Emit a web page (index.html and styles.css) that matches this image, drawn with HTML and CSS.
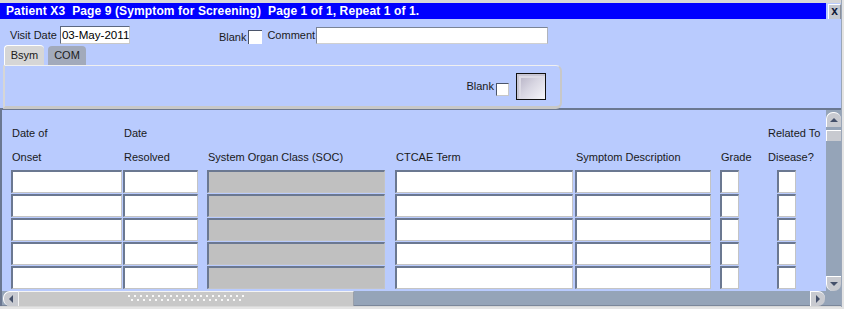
FILE: index.html
```html
<!DOCTYPE html>
<html>
<head>
<meta charset="utf-8">
<link rel="stylesheet" href="styles.css">
</head>
<body>
<div class="window">
  <div class="titlerow">
    <div class="titlebar">Patient X3&nbsp; Page 9 (Symptom for Screening)&nbsp; Page 1 of 1, Repeat 1 of 1.</div>
    <div class="closebtn">x</div>
  </div>
  <div class="header">
    <div class="toprow">
      <span class="lbl">Visit Date</span>
      <span class="field date">03-May-2011</span>
      <span class="lbl blank1">Blank</span>
      <span class="chk"></span>
      <span class="lbl comment">Comment</span>
      <span class="field commentbox"></span>
    </div>
    <div class="tabs">
      <div class="tab active">Bsym</div>
      <div class="tab">COM</div>
    </div>
    <div class="tabpanel">
      <span class="lbl">Blank</span>
      <span class="chk small"></span>
      <span class="sqbtn"></span>
    </div>
  </div>
  <div class="block">
    <div class="blockmain">
      <div class="grid">
        <div class="hrow">
          <div class="c c1">Date of</div>
          <div class="c c2">Date</div>
          <div class="c c3"></div>
          <div class="c c4"></div>
          <div class="c c5"></div>
          <div class="c c6"></div>
          <div class="c c7h">Related To</div>
        </div>
        <div class="hrow">
          <div class="c c1">Onset</div>
          <div class="c c2">Resolved</div>
          <div class="c c3">System Organ Class (SOC)</div>
          <div class="c c4">CTCAE Term</div>
          <div class="c c5">Symptom Description</div>
          <div class="c c6">Grade</div>
          <div class="c c7h">Disease?</div>
        </div>
        <div class="drow"><div class="f c1"></div><div class="f c2"></div><div class="f c3 ro"></div><div class="f c4"></div><div class="f c5"></div><div class="f c6"></div><div class="f c7"></div></div>
        <div class="drow"><div class="f c1"></div><div class="f c2"></div><div class="f c3 ro"></div><div class="f c4"></div><div class="f c5"></div><div class="f c6"></div><div class="f c7"></div></div>
        <div class="drow"><div class="f c1"></div><div class="f c2"></div><div class="f c3 ro"></div><div class="f c4"></div><div class="f c5"></div><div class="f c6"></div><div class="f c7"></div></div>
        <div class="drow"><div class="f c1"></div><div class="f c2"></div><div class="f c3 ro"></div><div class="f c4"></div><div class="f c5"></div><div class="f c6"></div><div class="f c7"></div></div>
        <div class="drow"><div class="f c1"></div><div class="f c2"></div><div class="f c3 ro"></div><div class="f c4"></div><div class="f c5"></div><div class="f c6"></div><div class="f c7"></div></div>
      </div>
      <div class="vscroll">
        <div class="vbtn up"><svg width="10" height="6" viewBox="0 0 10 6"><path d="M1 5 L5 1 L9 5 Z" fill="#44506a"/></svg></div>
        <div class="vthumb"></div>
        <div class="vtrack"></div>
        <div class="vbtn down"><svg width="10" height="6" viewBox="0 0 10 6"><path d="M1 1 L5 5 L9 1 Z" fill="#44506a"/></svg></div>
      </div>
    </div>
    <div class="hscroll">
      <div class="hbtn left"><svg width="6" height="10" viewBox="0 0 6 10"><path d="M5 1 L1 5 L5 9 Z" fill="#44506a"/></svg></div>
      <div class="hthumb"><div class="grip"></div></div>
      <div class="htrack"></div>
      <div class="hbtn right"><svg width="6" height="10" viewBox="0 0 6 10"><path d="M1 1 L5 5 L1 9 Z" fill="#44506a"/></svg></div>
      <div class="corner"></div>
    </div>
  </div>
</div>
</body>
</html>
```
FILE: styles.css
```css
* { box-sizing: border-box; }
body {
  margin: 0;
  background: #e4e4e4;
  font-family: "Liberation Sans", Arial, sans-serif;
  font-size: 11px;
  color: #1a1a1a;
}
.window {
  width: 842px;
  height: 307px;
  padding-top: 3px;
  background: #d8d8d8;
  border-right: 1px solid #9aa6b8;
}
.titlerow {
  display: flex;
  align-items: flex-start;
  height: 16px;
  background: #b9cbfe;
}
.titlebar {
  flex: 0 0 826px;
  height: 16px;
  background: #0000ff;
  color: #fff;
  font-weight: bold;
  font-size: 12px;
  letter-spacing: 0.12px;
  line-height: 16px;
  padding-left: 6px;
  white-space: nowrap;
}
.closebtn {
  margin-left: 2px;
  margin-top: 1px;
  width: 13px;
  height: 15px;
  background: #c4c8d0;
  border-top: 1px solid #fff;
  border-left: 1px solid #fff;
  border-right: 1px solid #8a8f9a;
  font-weight: bold;
  font-size: 12px;
  line-height: 13px;
  text-align: center;
  color: #101838;
}
.header {
  background: #b9cbfe;
  height: 91px;
  padding-top: 7px;
  border-bottom: 2px solid #6b7891;
}
.toprow {
  display: flex;
  align-items: center;
  height: 18px;
  padding-left: 10px;
}
.lbl { white-space: nowrap; }
.field {
  background: #fff;
  border-top: 2px solid #6b7891;
  border-left: 2px solid #6b7891;
  border-right: 1px solid #c8c8c8;
  border-bottom: 1px solid #c8c8c8;
}
.date {
  margin-left: 3px;
  width: 70px;
  height: 18px;
  font-size: 11.6px;
  line-height: 15px;
  color: #000;
  padding-left: 1px;
  border-top: 1px solid #5b6780;
  border-left: 1px solid #5b6780;
  white-space: nowrap;
  overflow: hidden;
}
.blank1 { margin-left: 89px; margin-top: 4px; }
.chk {
  width: 14px;
  height: 14px;
  background: #fff;
  border-top: 1px solid #4b556a;
  border-left: 1px solid #4b556a;
  margin-left: 2px;
  margin-top: 4px;
}
.comment { margin-left: 5px; }
.commentbox {
  margin-left: 1px;
  width: 232px;
  height: 17px;
  border-top: 1px solid #7a8496;
  border-left: 1px solid #7a8496;
  border-right: 1px solid #b0b4bc;
  border-bottom: 1px solid #d0d0d0;
}
.tabs {
  display: flex;
  margin-top: 1px;
  padding-left: 4px;
  height: 20px;
  align-items: flex-end;
}
.tab {
  height: 19px;
  line-height: 18px;
  background: #a2aabb;
  border-top-left-radius: 4px;
  border-top-right-radius: 4px;
  margin-right: 4px;
  color: #202020;
  text-align: center;
  width: 38px;
}
.tab.active {
  width: 40px;
  height: 20px;
  background: #d6d6d6;
  border-top: 1px solid #fff;
  border-left: 1px solid #fff;
}
.tabpanel {
  margin-left: 3px;
  width: 559px;
  height: 44px;
  border-top: 1px solid #f0f0f0;
  border-left: 2px solid #d6d6d6;
  border-right: 2px solid #c8c8c8;
  border-bottom: 3px solid #c8c8c8;
  border-top-right-radius: 6px;
  border-bottom-right-radius: 6px;
  display: flex;
  align-items: center;
  justify-content: flex-end;
  padding-right: 14px;
}
.chk.small {
  width: 13px;
  height: 13px;
  margin: 6px 7px 0 2px;
  border-right: 1px solid #c8c8c8;
  border-bottom: 1px solid #c8c8c8;
}
.sqbtn {
  width: 30px;
  height: 27px;
  border: 1px solid #111;
  background: linear-gradient(135deg, #b0acc0 0%, #d8d6e2 50%, #f6f6fa 100%);
  box-shadow: inset 2px 2px 0 #c8c6d4, inset 4px 4px 0 #dcdae4;
}
.block {
  background: #b9cbfe;
  border-left: 2px solid #6b7891;
}
.blockmain {
  display: flex;
  height: 181px;
}
.grid {
  flex: 0 0 824px;
  padding-top: 12px;
  overflow: hidden;
}
.hrow {
  display: flex;
  height: 24px;
  line-height: 22px;
  white-space: nowrap;
}
.drow {
  display: flex;
  height: 24px;
}
.c, .f { flex: 0 0 auto; }
.c { padding-left: 1px; }
.c1 { margin-left: 9px; width: 111px; }
.c2 { margin-left: 1px; width: 75px; }
.c3 { margin-left: 9px; width: 178px; }
.c4 { margin-left: 10px; width: 178px; }
.c5 { margin-left: 2px; width: 136px; }
.c6 { margin-left: 9px; width: 19px; }
.c7 { margin-left: 38px; width: 19px; }
.c7h { margin-left: 28px; width: 60px; }
.f {
  height: 23px;
  background: #fff;
  border-top: 2px solid #6b7891;
  border-left: 2px solid #6b7891;
  border-right: 1px solid #c4c4c4;
  border-bottom: 1px solid #c4c4c4;
}
.f.ro { background: #c0c0c0; }
.vscroll {
  flex: 0 0 15px;
  background: #95a4b8;
  display: flex;
  flex-direction: column;
  padding-top: 2px;
}
.vbtn {
  width: 15px;
  height: 15px;
  background: #c8cad0;
  border-top: 1px solid #fff;
  border-left: 1px solid #fff;
  display: flex;
  align-items: center;
  justify-content: center;
}
.vbtn.up { border-top-left-radius: 7px; border-top-right-radius: 7px; }
.vbtn.down { border-bottom-left-radius: 7px; border-bottom-right-radius: 7px; }
.vthumb {
  margin-top: 3px;
  width: 15px;
  height: 11px;
  background: #c8cad0;
  border-top: 1px solid #fff;
  border-left: 1px solid #fff;
}
.vtrack { flex: 1; }
.hscroll {
  display: flex;
  height: 15px;
  background: #95a4b8;
  border-bottom: 1px solid #7b879a;
}
.hbtn {
  width: 15px;
  height: 15px;
  background: #c8cad0;
  border-top: 1px solid #fff;
  border-left: 1px solid #fff;
  display: flex;
  align-items: center;
  justify-content: center;
}
.hbtn.left { margin-left: 1px; border-top-left-radius: 7px; border-bottom-left-radius: 7px; }
.hbtn.right { border-top-right-radius: 7px; border-bottom-right-radius: 7px; margin-right: 1px; }
.hthumb {
  width: 336px;
  height: 15px;
  background: #c8c8c8;
  border-top: 1px solid #f4f4f4;
  border-left: 1px solid #f4f4f4;
  border-right: 1px solid #9aa0aa;
  display: flex;
  align-items: center;
  justify-content: center;
}
.grip {
  width: 116px;
  height: 8px;
  background-image:
    radial-gradient(circle at 1px 1px, #f8f8f8 1px, transparent 1.2px),
    radial-gradient(circle at 4px 5px, #f8f8f8 1px, transparent 1.2px);
  background-size: 6px 8px;
}
.htrack { flex: 1; }
.corner { width: 15px; }
```
